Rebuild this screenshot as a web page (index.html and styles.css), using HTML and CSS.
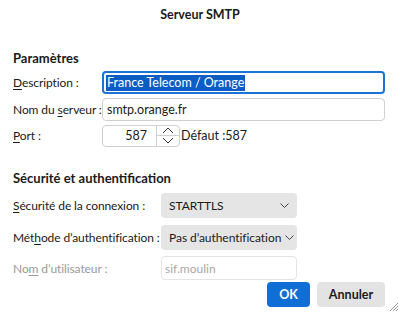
FILE: index.html
```html
<!DOCTYPE html>
<html lang="fr">
<head>
  <meta charset="UTF-8" />
  <title>Serveur SMTP</title>
  <link rel="stylesheet" href="styles.css">
</head>
<body>
  <div class="dialog">
    <header class="titlebar">Serveur SMTP</header>

    <main class="content">
      <section class="group">
        <h2>Paramètres</h2>
        <div class="form-grid params">
          <label><u>D</u>escription :</label>
          <div class="field focused"><span class="selected">France Telecom / Orange</span></div>

          <label>Nom du <u>s</u>erveur :</label>
          <div class="field">smtp.orange.fr</div>

          <label><u>P</u>ort :</label>
          <div class="port-row">
            <div class="spin">
              <span class="spin-value">587</span>
              <div class="spin-buttons">
                <span class="spin-btn">
                  <svg width="12" height="7" viewBox="0 0 12 7"><path d="M1 6 L6 1 L11 6" fill="none" stroke="#333" stroke-width="1"/></svg>
                </span>
                <span class="spin-btn">
                  <svg width="12" height="7" viewBox="0 0 12 7"><path d="M1 1 L6 6 L11 1" fill="none" stroke="#333" stroke-width="1"/></svg>
                </span>
              </div>
            </div>
            <span class="hint">Défaut :587</span>
          </div>
        </div>
      </section>

      <section class="group security">
        <h2>Sécurité et authentification</h2>
        <div class="form-grid auth">
          <label><u>S</u>écurité de la connexion :</label>
          <div class="select">
            <span>STARTTLS</span>
            <svg width="9" height="5" viewBox="0 0 9 5"><path d="M0.5 0.5 L4.5 4.5 L8.5 0.5" fill="none" stroke="#444" stroke-width="1"/></svg>
          </div>

          <label>Mét<u>h</u>ode d’authentification :</label>
          <div class="select">
            <span>Pas d’authentification</span>
            <svg width="9" height="5" viewBox="0 0 9 5"><path d="M0.5 0.5 L4.5 4.5 L8.5 0.5" fill="none" stroke="#444" stroke-width="1"/></svg>
          </div>

          <label class="disabled">No<u>m</u> d’utilisateur :</label>
          <div class="field user disabled">sif.moulin</div>
        </div>
      </section>
    </main>

    <footer class="buttons">
      <button class="btn primary">OK</button>
      <button class="btn">Annuler</button>
    </footer>

    <svg class="grip" width="10" height="10" viewBox="0 0 10 10">
      <path d="M9 1 L1 9 M9 4 L4 9 M9 7 L7 9" stroke="#999" stroke-width="1"/>
    </svg>
  </div>
</body>
</html>
```

FILE: styles.css
```css
/* Base */
*, *::before, *::after {
  box-sizing: border-box;
}
html, body {
  margin: 0;
  padding: 0;
  background: #ffffff;
  color: #1a1a1a;
  font-family: 'Lato', 'Noto Sans', sans-serif;
  font-size: 12px;
}

.dialog {
  position: relative;
  width: 400px;
  height: 313px;
  overflow: hidden;
}

/* Title */
.titlebar {
  height: 30px;
  line-height: 30px;
  text-align: center;
  font-weight: 700;
  font-size: 12.5px;
}

.content {
  padding: 0 15px 0 13px;
}

h2 {
  margin: 0;
  font-size: 13px;
  font-weight: 700;
  line-height: 16px;
}

.group h2 {
  margin-top: 20px;
  margin-bottom: 5px;
}
.group.security h2 {
  margin-top: 23px;
  margin-bottom: 7px;
}

/* Form grids */
.form-grid {
  display: grid;
  align-items: center;
}
.params {
  grid-template-columns: 89px 1fr;
  grid-template-rows: 23px 23px 22px;
  row-gap: 4px;
}
.params > :nth-child(n+5) {
  margin-top: -1px;
}
.auth {
  grid-template-columns: 148px 136px;
  grid-template-rows: 25px 25px 24px;
  row-gap: 7px;
}
.auth > :nth-child(n+5) {
  margin-top: -2px;
}

label {
  white-space: nowrap;
  letter-spacing: -0.1px;
}
label u {
  text-decoration-thickness: 1px;
  text-underline-offset: 2px;
}
.disabled {
  color: #9a9a9a;
}

/* Text fields */
.field {
  height: 100%;
  border: 1px solid #d0d0d0;
  border-radius: 4px;
  padding: 0 4px;
  display: flex;
  align-items: center;
  white-space: nowrap;
  background: #fff;
  font-size: 12.5px;
}
.field.focused {
  border: 2px solid #1a73d6;
  padding: 0 2px;
}
.selected {
  background: #0b5cc5;
  color: #ffffff;
  line-height: 16px;
  padding: 0 1px;
}
.field.user {
  border-color: #e4e4e4;
  color: #a8a8a8;
  padding-left: 3px;
  font-size: 12px;
}

/* Port spinner */
.port-row {
  display: flex;
  align-items: center;
  height: 100%;
  gap: 1px;
  font-size: 12.5px;
}
.spin {
  display: flex;
  width: 78px;
  height: 100%;
  border: 1px solid #d0d0d0;
  border-radius: 4px;
}
.spin-value {
  flex: 1;
  text-align: right;
  padding-right: 9px;
  line-height: 20px;
}
.spin-buttons {
  width: 23px;
  display: flex;
  flex-direction: column;
  border-left: 1px solid #d0d0d0;
}
.spin-btn {
  flex: 1;
  display: flex;
  align-items: center;
  justify-content: center;
}
.spin-btn + .spin-btn {
  border-top: 1px solid #d0d0d0;
}

/* Dropdowns */
.select {
  height: 100%;
  background: #e5e5e5;
  border-radius: 4px;
  display: flex;
  align-items: center;
  justify-content: space-between;
  gap: 4px;
  padding: 0 8px;
  white-space: nowrap;
  font-size: 12px;
  letter-spacing: -0.05px;
}
.select svg {
  flex: none;
}

/* Buttons */
.buttons {
  display: flex;
  justify-content: flex-end;
  gap: 7px;
  padding: 1px 15px 0 0;
}
.btn {
  height: 25px;
  border: none;
  border-radius: 4px;
  font-family: inherit;
  font-size: 12.5px;
  font-weight: 700;
  background: #e3e3e3;
  color: #1a1a1a;
  padding: 0;
  width: 68px;
}
.btn.primary {
  width: 43px;
  background: #0f6fd6;
  color: #ffffff;
}

/* Resize grip, sits over the corner */
.grip {
  position: absolute;
  right: 1px;
  bottom: 1px;
}
```
